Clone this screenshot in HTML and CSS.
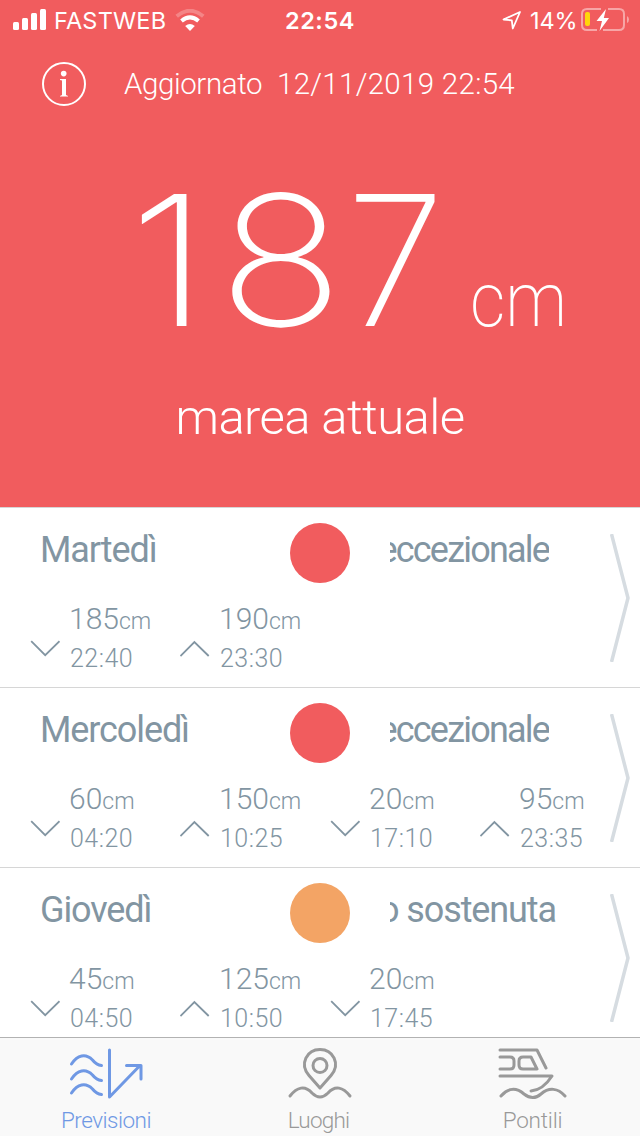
FILE: index.html
```
<!DOCTYPE html>
<html lang="it">
<head>
  <meta charset="UTF-8" />
  <meta name="viewport" content="width=device-width, initial-scale=1.0"/>
  <title>Marea attuale</title>
  <link rel="stylesheet" href="styles.css">
</head>
<body>
  <!-- Current tide -->
  <header class="hero">
    <div class="statusbar">
      <div class="carrier">
        <svg width="34" height="22" viewBox="0 0 34 22" fill="#fff">
          <rect x="0" y="13" width="6" height="8" rx="1.5"/>
          <rect x="9" y="9" width="6" height="12" rx="1.5"/>
          <rect x="18" y="4" width="6" height="17" rx="1.5"/>
          <rect x="27" y="0" width="6" height="21" rx="1.5"/>
        </svg>
        <span class="network">FASTWEB</span>
        <svg width="30" height="22" viewBox="0 0 30 22" fill="none" stroke="#fff" stroke-width="4">
          <path d="M1.7 7.2 Q15 -3.6 28.3 7.2" stroke-opacity=".25"/>
          <path d="M6.5 12 Q15 4.8 23.5 12"/>
          <path d="M10.2 17 Q15 13 19.8 17 L15 22 Z" fill="#fff" stroke="none"/>
        </svg>
      </div>
      <span class="clock">22:54</span>
      <div class="power">
        <svg width="20" height="20" viewBox="0 0 20 20" fill="none" stroke="#fff" stroke-width="1.8" stroke-linejoin="round">
          <path d="M18 2 L1.5 9.5 L9.8 10.4 L10.8 18.5 Z"/>
        </svg>
        <span class="percent">14%</span>
        <svg width="48" height="24" viewBox="0 0 48 24">
          <path d="M20 1 H6 Q1 1 1 6 V17 Q1 22 6 22 H16 M27 1 H38 Q43 1 43 6 V17 Q43 22 38 22 H22" fill="none" stroke="#fff" stroke-opacity=".45" stroke-width="2"/>
          <path d="M46 8 Q48 9 48 11.5 Q48 14 46 15 Z" fill="#fff" fill-opacity=".45"/>
          <rect x="4" y="4" width="5" height="14" rx="2" fill="#ffd60a"/>
          <path d="M25 1 L15.500 13 H21 L18.500 23 L28 10 H22.800 Z" fill="#fff"/>
        </svg>
      </div>
    </div>

    <div class="updated">
      <svg width="44" height="44" viewBox="0 0 44 44">
        <circle cx="22" cy="22" r="21" fill="none" stroke="#fff" stroke-width="2"/>
        <circle cx="21.7" cy="11.6" r="2.8" fill="#fff"/>
        <path d="M18 17 H24 V33 L26 34 V34.5 H18 V34 L20 33 V18.5 L18 18 Z" fill="#fff"/>
      </svg>
      <span class="updated-label">Aggiornato</span>
      <span class="updated-date">12/11/2019 22:54</span>
    </div>

    <div class="level"><span class="level-value"><span>1</span><span>8</span><span>7</span></span><span class="level-unit">cm</span></div>
    <h1>marea attuale</h1>
  </header>

  <!-- Forecast -->
  <main class="days">
    <section class="day">
      <div class="day-head">
        <h2>Martedì</h2>
        <i class="dot"></i>
        <div class="state"><span>eccezionale</span></div>
      </div>
      <div class="tides">
        <div class="tide"><svg class="arrow"><use href="#down"/></svg><p>185<small>cm</small></p><time>22:40</time></div>
        <div class="tide"><svg class="arrow"><use href="#up"/></svg><p>190<small>cm</small></p><time>23:30</time></div>
      </div>
      <svg class="more"><use href="#more"/></svg>
    </section>

    <section class="day">
      <div class="day-head">
        <h2>Mercoledì</h2>
        <i class="dot"></i>
        <div class="state"><span>eccezionale</span></div>
      </div>
      <div class="tides">
        <div class="tide"><svg class="arrow"><use href="#down"/></svg><p>60<small>cm</small></p><time>04:20</time></div>
        <div class="tide"><svg class="arrow"><use href="#up"/></svg><p>150<small>cm</small></p><time>10:25</time></div>
        <div class="tide"><svg class="arrow"><use href="#down"/></svg><p>20<small>cm</small></p><time>17:10</time></div>
        <div class="tide"><svg class="arrow"><use href="#up"/></svg><p>95<small>cm</small></p><time>23:35</time></div>
      </div>
      <svg class="more"><use href="#more"/></svg>
    </section>

    <section class="day">
      <div class="day-head">
        <h2>Giovedì</h2>
        <i class="dot orange"></i>
        <div class="state sustained"><span>o sostenuta</span></div>
      </div>
      <div class="tides">
        <div class="tide"><svg class="arrow"><use href="#down"/></svg><p>45<small>cm</small></p><time>04:50</time></div>
        <div class="tide"><svg class="arrow"><use href="#up"/></svg><p>125<small>cm</small></p><time>10:50</time></div>
        <div class="tide"><svg class="arrow"><use href="#down"/></svg><p>20<small>cm</small></p><time>17:45</time></div>
      </div>
      <svg class="more"><use href="#more"/></svg>
    </section>
  </main>

  <!-- Tabs -->
  <nav class="tabs">
    <a class="tab active">
      <svg width="76" height="56" viewBox="0 0 76 56">
        <path d="M3.500 17 C9.500 8 17.500 6 24.500 13 Q28.500 18 33.500 18.500 M3.500 32 C9.500 23 17.500 21 24.500 28 Q28.500 33 33.500 33.500 M3.500 46 C9.500 37 17.500 35 24.500 42 Q28.500 47 33.500 47.500"/>
        <path d="M41.500 3 V50 L71.500 19 M58.500 18.500 H73 V32"/>
      </svg>
      <span>Previsioni</span>
    </a>
    <a class="tab places">
      <svg width="76" height="56" viewBox="0 0 76 56">
        <path d="M39 41 L28 28.500 C18 17 26 2.500 39 2.500 S60 17 50 28.500 Z"/>
        <circle cx="39" cy="18.500" r="7"/>
        <path d="M9 49 C16 40 24 38 31 46 Q39 54 47 46 C54 38 62 40 69 49"/>
      </svg>
      <span>Luoghi</span>
    </a>
    <a class="tab piers">
      <svg width="76" height="56" viewBox="0 0 76 56">
        <path d="M5 3 H42 L51 21 M5 10 H15 Q19 10 19 14 V18 Q19 22 15 22 H5 M28 10 H36 L42 22 H28 Q24 22 24 18 V14 Q24 10 28 10 Z"/>
        <path d="M5 29 H57 Q48 43 36 44 M6 49 C13 41 21 40 29 47 Q38 54 46 47 C54 40 63 41 70 49"/>
      </svg>
      <span>Pontili</span>
    </a>
  </nav>

  <svg class="symbols">
    <symbol id="down" viewBox="0 0 30 17"><path d="M1.200 1.200 L15.200 15.200 L29.500 1.200" fill="none" stroke="#8295a2" stroke-width="1.800"/></symbol>
    <symbol id="up" viewBox="0 0 30 17"><path d="M.4 16 L14.400 2 L28.700 16" fill="none" stroke="#8295a2" stroke-width="1.800"/></symbol>
    <symbol id="more" viewBox="0 0 20 128"><path d="M1.500 0 L18 64 L1.500 128" fill="none" stroke="#d6dce1" stroke-width="3.500"/></symbol>
  </svg>
</body>
</html>
```
FILE: styles.css
```
* {
  margin: 0;
  padding: 0;
  box-sizing: border-box;
}

body {
  width: 640px;
  height: 1136px;
  overflow: hidden;
  display: flex;
  flex-direction: column;
  font-family: Roboto, "Open Sans", sans-serif;
  font-weight: 300;
  color: #8295a2;
  background: #fff;
}

svg {
  display: block;
  flex: none;
}

.symbols {
  display: none;
}

/* Header */
.hero {
  flex: none;
  height: 507px;
  background: #f15c5e;
  color: #fff;
  white-space: nowrap;
}

.statusbar {
  display: grid;
  grid-template-columns: 240px 160px 240px;
  align-items: center;
  height: 40px;
  font-family: Inter, "Liberation Sans", sans-serif;
  font-size: 23.5px;
  font-weight: 400;
}

.carrier {
  display: flex;
  align-items: center;
  padding-left: 13px;
}

.network {
  width: 127px;
  padding-left: 7px;
  letter-spacing: 0.2px;
}

.carrier svg:last-child {
  margin-left: 1px;
}

.clock {
  font-weight: 600;
  letter-spacing: 0.6px;
  text-align: center;
}

.power {
  display: flex;
  align-items: center;
  padding-left: 102px;
}

.percent {
  width: 48px;
  margin: 0 1px 0 8px;
  letter-spacing: -0.1px;
}

.power svg:last-child {
  margin-left: 2px;
}

.updated {
  display: flex;
  align-items: center;
  height: 44px;
  margin-top: 22px;
  padding-left: 42px;
  font-size: 29.5px;
}

.updated-label {
  width: 153px;
  margin-left: 38px;
  letter-spacing: -0.4px;
}

.updated-date {
  letter-spacing: 0.3px;
}

.level {
  display: flex;
  align-items: baseline;
  height: 226px;
  margin-top: 41px;
  padding-left: 122px;
  line-height: 226px;
}

.level-value {
  display: flex;
  width: 348px;
  font-family: Inter, sans-serif;
  font-size: 182px;
  font-weight: 200;
}

.level-value span:nth-child(1) {
  margin-left: 12px;
  transform: scaleX(1.15);
}

.level-value span:nth-child(2) {
  margin-left: 23px;
  transform: scaleX(1.14);
}

.level-value span:nth-child(3) {
  margin-left: 9px;
  transform: scaleX(0.98);
}

.level-unit {
  font-size: 76px;
  font-weight: 200;
  transform: scaleX(0.91);
  transform-origin: left;
}

h1 {
  margin-top: 15px;
  font-size: 49px;
  font-weight: 300;
  line-height: 60px;
  letter-spacing: -0.6px;
  text-align: center;
}

/* Forecast rows */
.days {
  flex: 1;
  min-height: 0;
  overflow: hidden;
}

.day {
  position: relative;
  height: 180px;
  border-top: 1px solid #d6d6d6;
}

.day-head {
  display: grid;
  grid-template-columns: 250px 100px 200px;
  align-items: center;
  height: 90px;
  padding-left: 40px;
}

h2,
.state {
  font-size: 36px;
  font-weight: 400;
  line-height: 50px;
  letter-spacing: -1.1px;
  margin-top: -6px;
}

.state {
  overflow: hidden;
  display: flex;
  justify-content: flex-end;
  width: 159px;
  letter-spacing: -1.8px;
  white-space: nowrap;
}

.sustained {
  width: 166px;
  letter-spacing: -1.1px;
}

.dot {
  width: 60px;
  height: 60px;
  border-radius: 50%;
  background: #f15c5e;
}

.orange {
  background: #f3a465;
}

.tides {
  display: flex;
  padding-left: 30px;
}

.tide {
  display: grid;
  grid-template-columns: 39px 111px;
  grid-template-rows: 40px 40px;
  line-height: 41px;
  white-space: nowrap;
}

.tide p {
  grid-column: 2;
  font-size: 30px;
}

.tide small {
  font-size: 23px;
}

.tide time {
  grid-column: 2;
  grid-row: 2;
  padding-left: 1px;
  font-size: 25px;
  letter-spacing: 0.5px;
}

.arrow {
  grid-row: 2;
  width: 30px;
  height: 17px;
  margin-top: 2px;
}

.more {
  position: absolute;
  top: 26px;
  right: 10px;
  width: 20px;
  height: 128px;
}

/* Tab bar */
.tabs {
  flex: none;
  display: grid;
  grid-template-columns: 212px 213px 215px;
  height: 99px;
  border-top: 1px solid #b2b2b2;
  background: #f9f9f9;
}

.tab {
  display: flex;
  flex-direction: column;
  align-items: center;
  padding-top: 9px;
  color: #999;
  font-size: 22.5px;
  line-height: 34px;
  letter-spacing: -0.5px;
}

.tab svg {
  fill: none;
  stroke: currentColor;
  stroke-width: 3;
  stroke-linecap: round;
  stroke-linejoin: round;
}

.places {
  letter-spacing: -0.8px;
}

.piers {
  letter-spacing: -0.2px;
}

.active {
  color: #6f98e4;
}
```
